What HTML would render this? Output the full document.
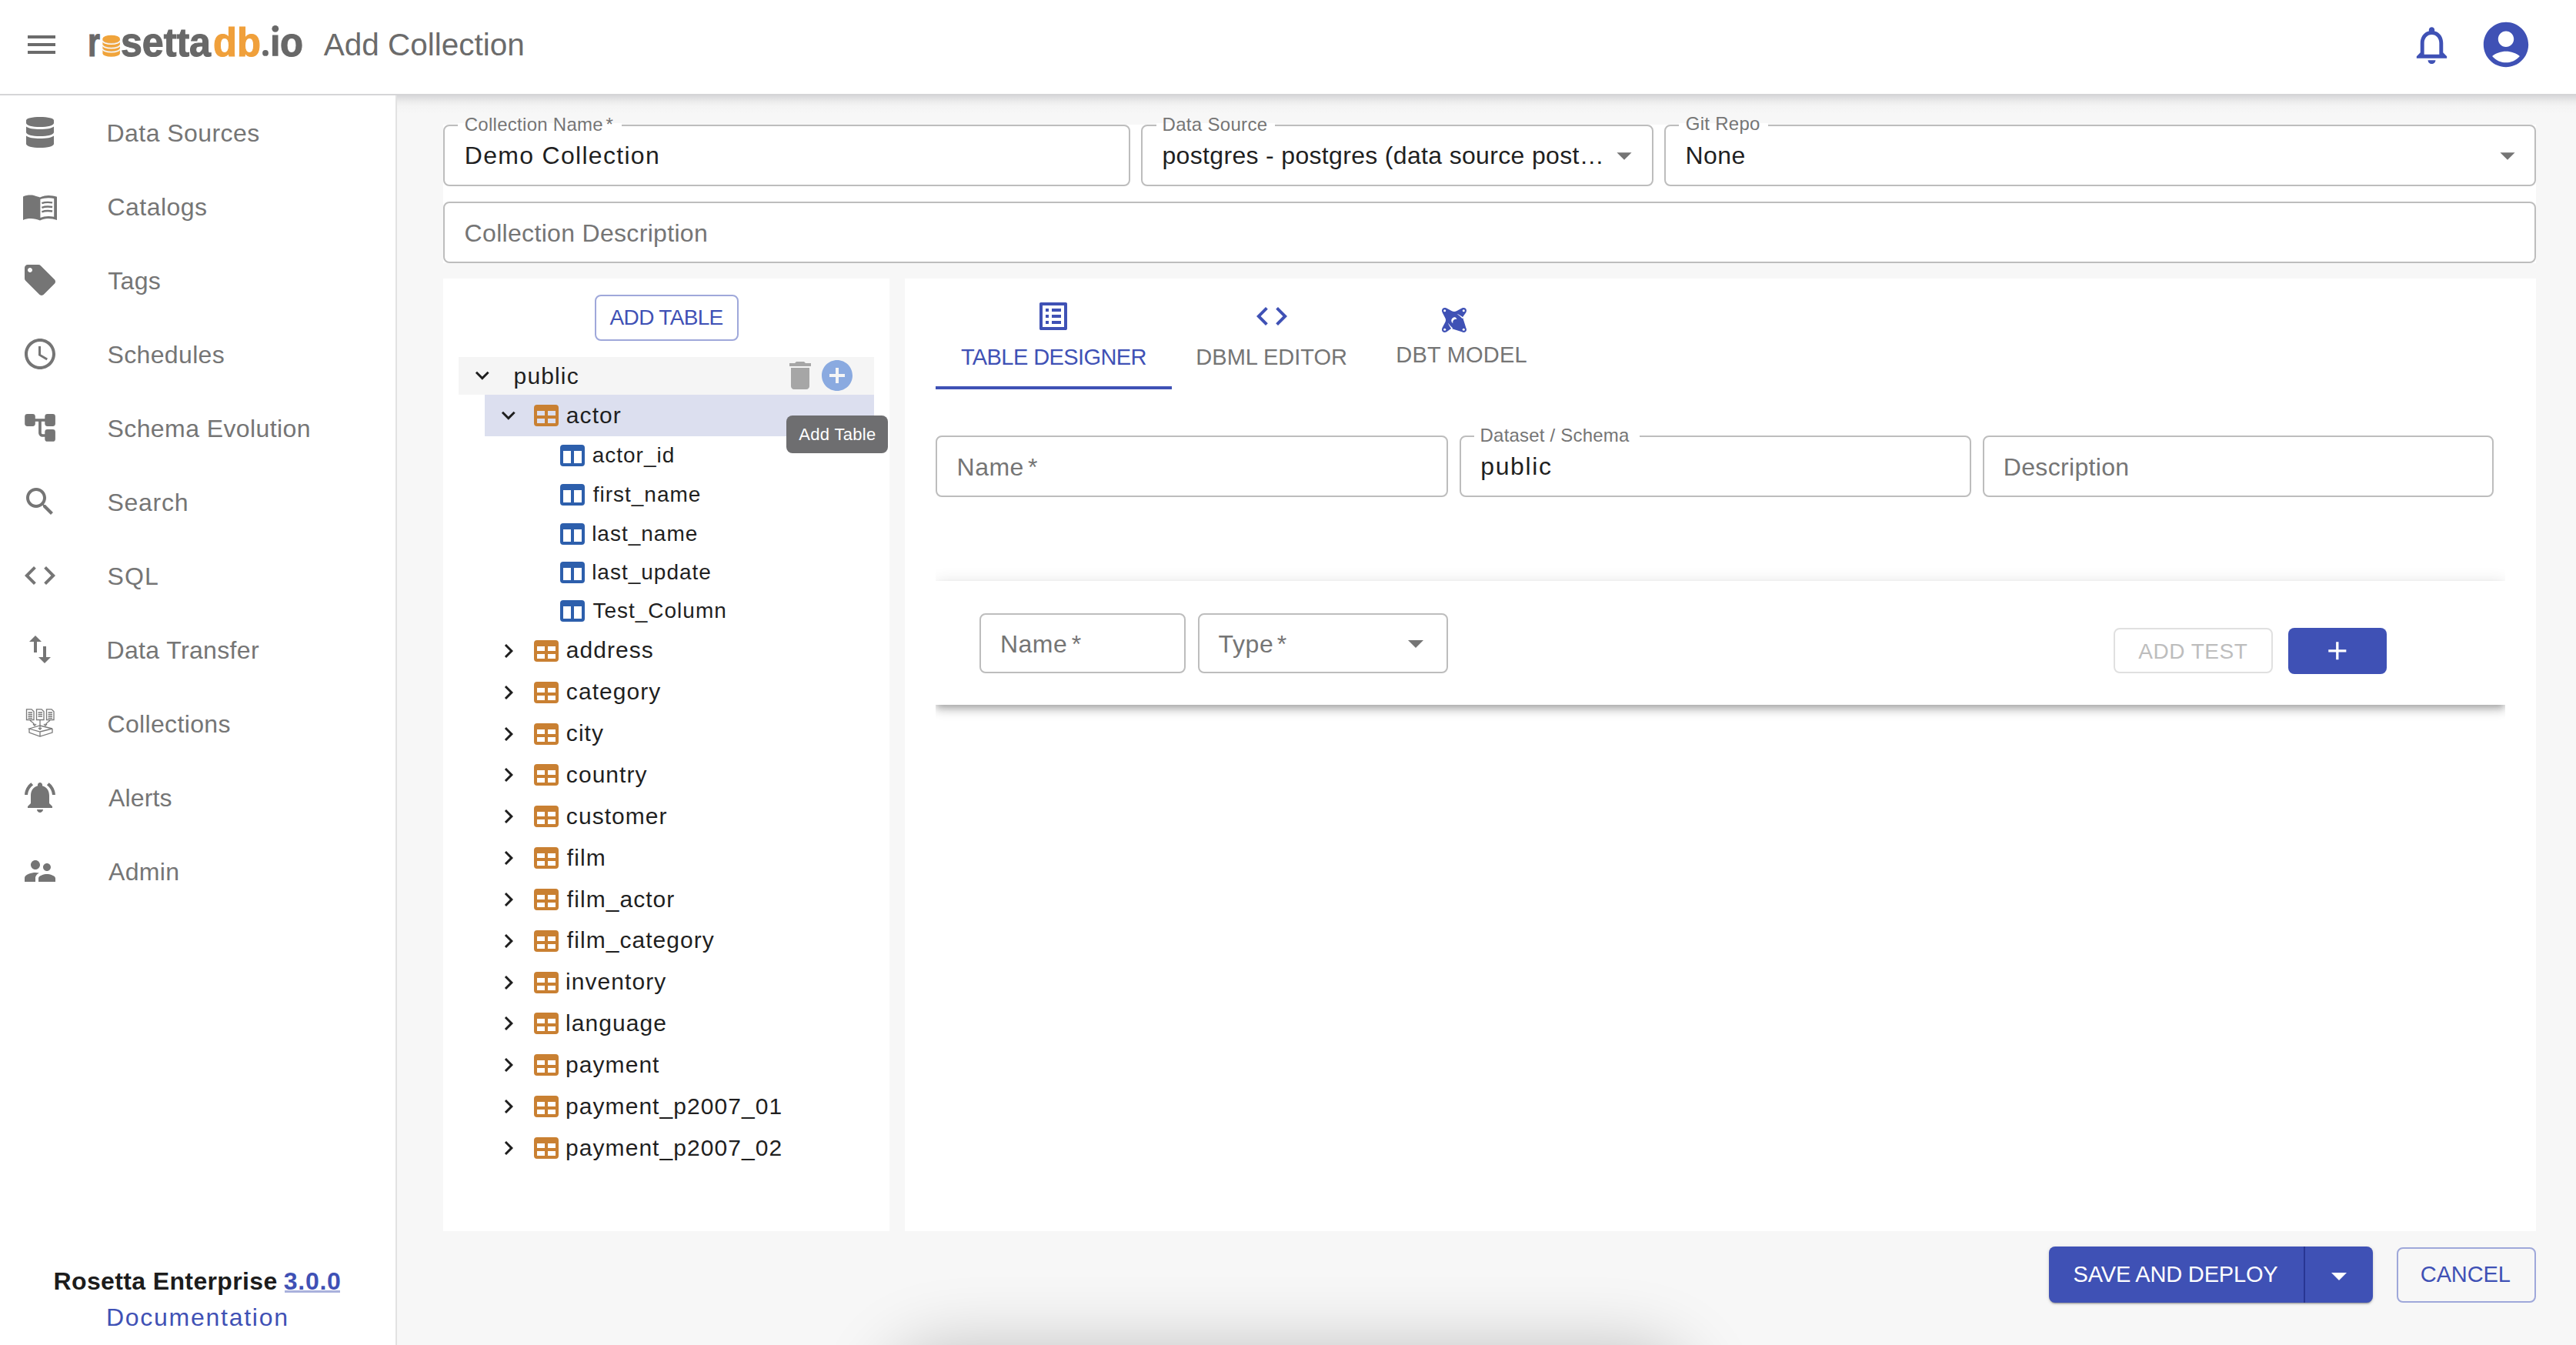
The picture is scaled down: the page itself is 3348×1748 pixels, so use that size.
<!DOCTYPE html><html><head><meta charset="utf-8"><style>
html,body{margin:0;padding:0;}
body{width:3348px;height:1748px;position:relative;overflow:hidden;background:#f7f7f7;font-family:"Liberation Sans",sans-serif;}
.t{position:absolute;white-space:nowrap;line-height:1;}
.b{position:absolute;box-sizing:border-box;}
.i{position:absolute;overflow:visible;}
@media (max-width:2400px){html{zoom:0.5;}}
</style></head><body>
<div class="b" style="left:0.00px;top:122.00px;width:3348.00px;height:28.00px;background:linear-gradient(#d3d3d6 0px,#dcdcde 4px,#ececec 10px,#f4f4f4 16px,#f7f7f7 26px);"></div>
<div class="b" style="left:0.00px;top:0.00px;width:3348.00px;height:122.00px;background:#fff;"></div>
<div class="b" style="left:0.00px;top:122.00px;width:3348.00px;height:2.00px;background:#d5d5d7;"></div>
<svg class="i" style="left:30.00px;top:34.30px;" width="48" height="48" viewBox="0 0 24 24"><path fill="#6b6b6b" d="M3 18h18v-2H3v2zm0-5h18v-2H3v2zm0-7v2h18V6H3z"/></svg>
<svg class="i" style="left:0;top:0" width="420" height="110" viewBox="0 0 420 110">
<text x="114" y="72.8" font-family="Liberation Sans" font-weight="700" font-size="51" fill="#686868" stroke="#686868" stroke-width="1.1" textLength="16" lengthAdjust="spacingAndGlyphs">r</text>
<text x="157" y="72.8" font-family="Liberation Sans" font-weight="700" font-size="51" fill="#686868" stroke="#686868" stroke-width="1.1" textLength="117" lengthAdjust="spacingAndGlyphs">setta</text>
<text x="277" y="72.8" font-family="Liberation Sans" font-weight="700" font-size="51" fill="#f0a03b" stroke="#f0a03b" stroke-width="1.1" textLength="62" lengthAdjust="spacingAndGlyphs">db</text>
<g fill="#686868"><circle cx="345" cy="68.9" r="3.9"/><rect x="354" y="45.5" width="7.5" height="27.3"/><circle cx="357.8" cy="37.3" r="4.4"/></g>
<text x="364" y="72.8" font-family="Liberation Sans" font-weight="700" font-size="51" fill="#686868" stroke="#686868" stroke-width="1.1" textLength="30" lengthAdjust="spacingAndGlyphs">o</text>
<path fill="#f0a43b" d="M133.4 50.2 A11.25 4.5 0 0 1 155.9 50.2 V69.4 A11.25 4.3 0 0 1 133.4 69.4Z"/>
<path fill="none" stroke="#fff" stroke-width="1.5" d="M133.4 53.0 A11.25 4.2 0 0 0 155.9 53.0 M133.4 58.6 A11.25 4.2 0 0 0 155.9 58.6 M133.4 63.6 A11.25 4.2 0 0 0 155.9 63.6"/>
<path fill="none" stroke="#d8d8d8" stroke-width="0.6" d="M133.4 52.2 A11.25 4.2 0 0 0 155.9 52.2 M133.4 57.8 A11.25 4.2 0 0 0 155.9 57.8 M133.4 62.8 A11.25 4.2 0 0 0 155.9 62.8"/>
</svg>
<div class="t" style="left:420.70px;top:37.62px;font-size:40.5px;color:#6b6b6b;font-weight:400;letter-spacing:-0.008px;">Add Collection</div>
<svg class="i" style="left:3130.80px;top:28.85px;" width="59" height="59" viewBox="0 0 24 24"><path fill="#3f51b5" d="M12 22c1.1 0 2-.9 2-2h-4c0 1.1.9 2 2 2zm6-6v-5c0-3.07-1.63-5.64-4.5-6.32V4c0-.83-.67-1.5-1.5-1.5s-1.5.67-1.5 1.5v.68C7.64 5.36 6 7.92 6 11v5l-2 2v1h16v-1l-2-2zm-2 1H8v-6c0-2.48 1.51-4.5 4-4.5s4 2.02 4 4.5v6z"/></svg>
<svg class="i" style="left:3222.20px;top:22.70px;" width="70" height="70" viewBox="0 0 24 24"><path fill="#3f51b5" d="M12 2C6.48 2 2 6.48 2 12s4.48 10 10 10 10-4.48 10-10S17.52 2 12 2zm0 4c1.93 0 3.5 1.57 3.5 3.5S13.93 13 12 13s-3.5-1.57-3.5-3.5S10.07 6 12 6zm0 14c-2.03 0-4.43-.82-6.14-2.88C7.55 15.8 9.68 15 12 15s4.45.8 6.14 2.12C16.43 19.18 14.03 20 12 20z"/></svg>
<div class="b" style="left:0.00px;top:124.00px;width:514.00px;height:1624.00px;background:#fff;"></div>
<div class="b" style="left:514.00px;top:124.00px;width:2.00px;height:1624.00px;background:#e2e2e2;"></div>
<div class="t" style="left:138.50px;top:156.51px;font-size:32px;color:#757575;font-weight:400;letter-spacing:0.445px;">Data Sources</div>
<div class="t" style="left:139.50px;top:252.51px;font-size:32px;color:#757575;font-weight:400;letter-spacing:0.45px;">Catalogs</div>
<div class="t" style="left:140.25px;top:348.51px;font-size:32px;color:#757575;font-weight:400;letter-spacing:0.317px;">Tags</div>
<div class="t" style="left:139.50px;top:444.51px;font-size:32px;color:#757575;font-weight:400;letter-spacing:0.35px;">Schedules</div>
<div class="t" style="left:139.50px;top:540.51px;font-size:32px;color:#757575;font-weight:400;letter-spacing:0.407px;">Schema Evolution</div>
<div class="t" style="left:139.50px;top:636.51px;font-size:32px;color:#757575;font-weight:400;letter-spacing:0.71px;">Search</div>
<div class="t" style="left:139.50px;top:732.51px;font-size:32px;color:#757575;font-weight:400;letter-spacing:1.15px;">SQL</div>
<div class="t" style="left:138.50px;top:828.51px;font-size:32px;color:#757575;font-weight:400;letter-spacing:0.358px;">Data Transfer</div>
<div class="t" style="left:139.50px;top:924.51px;font-size:32px;color:#757575;font-weight:400;letter-spacing:0.34px;">Collections</div>
<div class="t" style="left:141.00px;top:1020.51px;font-size:32px;color:#757575;font-weight:400;letter-spacing:0.15px;">Alerts</div>
<div class="t" style="left:141.00px;top:1116.51px;font-size:32px;color:#757575;font-weight:400;letter-spacing:0.337px;">Admin</div>
<svg class="i" style="left:34.00px;top:152.00px;" width="36" height="40" viewBox="0 0 36 40"><g fill="#757575">
<path d="M0 4.5 C0 1.5 8 0 18 0 S36 1.5 36 4.5 V8 C36 11 28 13 18 13 S0 11 0 8Z"/>
<path d="M0 12.5 C3 15 10 16 18 16 S33 15 36 12.5 V20 C36 23 28 25 18 25 S0 23 0 20Z"/>
<path d="M0 24.5 C3 27 10 28 18 28 S33 27 36 24.5 V35 C36 38 28 40 18 40 S0 38 0 35Z"/>
</g></svg>
<svg class="i" style="left:30.00px;top:253.00px;" width="44" height="34" viewBox="0 0 44 34"><g fill="#757575">
<path d="M0 2.5 C4 0.5 10 0 14 1 C16.5 1.6 19 2.6 22 3.6 V33.5 C18.5 32 14 31 10 31 C6 31 3 31.5 0 33Z"/>
<path d="M22 3.6 C25 2.2 29 1 33 1 C37 1 40.5 1.8 44 2.8 V33 C40.5 31.8 36.5 31 32.5 31 C28.5 31 25 32 22 33.5Z"/>
</g>
<path fill="#fff" d="M22.4 6 C25.5 5 29 4.3 33 4.3 C35.5 4.3 37.8 4.6 40.2 5 V28.8 C37.8 28.3 35.5 28 33 28 C29 28 25.5 28.8 22.4 30Z"/>
<path fill="none" stroke="#757575" stroke-width="2.4" d="M24.4 11.2 C28 9.8 33 9.6 38.1 10.4 M24.4 16.8 C28 15.4 33 15.2 38.1 16 M24.4 22.3 C28 20.9 33 20.7 38.1 21.5"/>
</svg>
<svg class="i" style="left:28.00px;top:340.00px;" width="48" height="48" viewBox="0 0 24 24"><path fill="#757575" d="M21.41 11.58l-9-9C12.05 2.22 11.55 2 11 2H4c-1.1 0-2 .9-2 2v7c0 .55.22 1.05.59 1.42l9 9c.36.36.86.58 1.41.58.55 0 1.05-.22 1.41-.59l7-7c.37-.36.59-.86.59-1.41 0-.55-.23-1.06-.59-1.42zM5.5 7C4.67 7 4 6.33 4 5.5S4.67 4 5.5 4 7 4.67 7 5.5 6.33 7 5.5 7z"/></svg>
<svg class="i" style="left:28.00px;top:436.00px;" width="48" height="48" viewBox="0 0 24 24"><path fill="#757575" d="M11.99 2C6.47 2 2 6.48 2 12s4.47 10 9.99 10C17.52 22 22 17.52 22 12S17.52 2 11.99 2zM12 20c-4.42 0-8-3.58-8-8s3.58-8 8-8 8 3.58 8 8-3.58 8-8 8zm.5-13H11v6l5.25 3.15.75-1.23-4.5-2.67z"/></svg>
<svg class="i" style="left:32.00px;top:538.00px;" width="42" height="42" viewBox="0 0 42 42"><g fill="#757575">
<rect x="13" y="6.2" width="14" height="3.6"/>
<path d="M18.1 8 H21.8 V24.5 C21.8 25.5 22.5 26.2 23.5 26.2 H28 V29.8 H23.5 C20.4 29.8 18.1 27.5 18.1 24.5Z"/>
<rect x="0.2" y="0" width="13.6" height="16" rx="3.4"/>
<rect x="26.3" y="0" width="13.6" height="16" rx="3.4"/>
<rect x="26.3" y="20" width="13.6" height="15.8" rx="3.4"/>
</g></svg>
<svg class="i" style="left:28.00px;top:628.00px;" width="48" height="48" viewBox="0 0 24 24"><path fill="#757575" d="M15.5 14h-.79l-.28-.27C15.41 12.59 16 11.11 16 9.5 16 5.91 13.09 3 9.5 3S3 5.91 3 9.5 5.91 16 9.5 16c1.61 0 3.09-.59 4.23-1.57l.27.28v.79l5 4.99L20.49 19l-4.99-5zm-6 0C7.01 14 5 11.99 5 9.5S7.01 5 9.5 5 14 7.01 14 9.5 11.99 14 9.5 14z"/></svg>
<svg class="i" style="left:28.00px;top:724.00px;" width="48" height="48" viewBox="0 0 24 24"><path fill="#757575" d="M9.4 16.6L4.8 12l4.6-4.6L8 6l-6 6 6 6 1.4-1.4zm5.2 0l4.6-4.6-4.6-4.6L16 6l6 6-6 6-1.4-1.4z"/></svg>
<svg class="i" style="left:28.00px;top:820.00px;" width="48" height="48" viewBox="0 0 24 24"><path fill="#757575" d="M16 17.01V10h-2v7.01h-3L15 21l4-3.99h-3zM9 3L5 6.99h3V14h2V6.99h3L9 3z"/></svg>
<svg class="i" style="left:32.00px;top:921.00px;" width="44" height="44" viewBox="0 0 44 44"><g fill="none" stroke="#7a7a7a" stroke-width="1.3">
<path d="M2.5 0.8 H9 L12 3.8 V14.5 H2.5Z"/><path d="M15.5 0.8 H22 L25 3.8 V14.5 H15.5Z"/><path d="M28.5 0.8 H35 L38 3.8 V14.5 H28.5Z"/>
<path d="M4.5 5 H10 M4.5 7.5 H10 M4.5 10 H10 M4.5 12.3 H10 M17.5 5 H23 M17.5 7.5 H23 M17.5 10 H23 M30.5 5 H36 M30.5 7.5 H36 M30.5 10 H36 M30.5 12.3 H36"/>
<path d="M7 14.5 C8 18 12 17 13 21.5 M20 14.5 V27 M33 14.5 C32 18 28 17 27 21.5"/>
<path d="M11 20 L13 22 L15 20 M18 25 L20 27 L22 25 M25 20 L27 22 L29 20"/>
<path d="M6 26 L20 22 L36 26 L20 30Z M6 26 V31 L20 36 L36 31 V26 M20 30 V36"/>
</g></svg>
<svg class="i" style="left:28.00px;top:1012.00px;" width="48" height="48" viewBox="0 0 24 24"><path fill="#757575" d="M7.58 4.08L6.15 2.65C3.75 4.48 2.17 7.3 2.03 10.5h2c.15-2.65 1.51-4.97 3.55-6.42zm12.39 6.42h2c-.15-3.2-1.73-6.02-4.12-7.85l-1.42 1.43c2.02 1.45 3.39 3.77 3.54 6.42zM18 11c0-3.07-1.64-5.64-4.5-6.32V4c0-.83-.67-1.5-1.5-1.5s-1.5.67-1.5 1.5v.68C7.63 5.36 6 7.92 6 11v5l-2 2v1h16v-1l-2-2v-5zm-6 11c.14 0 .27-.01.4-.04.65-.14 1.18-.58 1.44-1.18.1-.24.15-.5.15-.78h-4c.01 1.1.9 2 2.01 2z"/></svg>
<svg class="i" style="left:28.00px;top:1108.00px;" width="48" height="48" viewBox="0 0 24 24"><path fill="#757575" d="M16.5 12c1.38 0 2.49-1.12 2.49-2.5S17.88 7 16.5 7C15.12 7 14 8.12 14 9.5s1.12 2.5 2.5 2.5zM9 11c1.66 0 2.99-1.34 2.99-3S10.66 5 9 5C7.34 5 6 6.34 6 8s1.34 3 3 3zm7.5 3c-1.83 0-5.5.92-5.5 2.75V19h11v-2.25c0-1.83-3.67-2.75-5.5-2.75zM9 13c-2.33 0-7 1.17-7 3.5V19h7v-2.25c0-.85.33-2.34 2.37-3.47C10.5 13.1 9.66 13 9 13z"/></svg>
<div class="t" style="left:69.50px;top:1648.71px;font-size:32px;color:#1c1c1c;font-weight:700;letter-spacing:0.371px;">Rosetta Enterprise</div>
<div class="t" style="left:368.75px;top:1648.71px;font-size:32px;color:#3f51b5;font-weight:700;letter-spacing:0.738px;">3.0.0</div>
<div class="b" style="left:369.50px;top:1676.50px;width:72.50px;height:3.00px;background:#a9b1dc;"></div>
<div class="t" style="left:138.00px;top:1695.71px;font-size:32px;color:#3f51b5;font-weight:400;letter-spacing:1.729px;">Documentation</div>
<div class="b" style="left:576.00px;top:162.00px;width:2720.00px;height:180.00px;background:#fff;"></div>
<div class="b" style="left:576.00px;top:162.00px;width:893.00px;height:80.00px;border:2px solid #bdbdbd;border-radius:8px;background:#fff;"></div>
<div class="b" style="left:595.00px;top:160.00px;width:213.30px;height:5.00px;background:#fff;"></div>
<div class="t" style="left:603.75px;top:149.78px;font-size:24px;color:#757575;font-weight:400;letter-spacing:0.275px;">Collection Name</div>
<div class="t" style="left:787.50px;top:149.78px;font-size:24px;color:#757575;font-weight:400;letter-spacing:0px;">*</div>
<div class="t" style="left:603.80px;top:185.81px;font-size:32px;color:#1f1f1f;font-weight:400;letter-spacing:1.296px;">Demo Collection</div>
<div class="b" style="left:1483.00px;top:162.00px;width:666.00px;height:80.00px;border:2px solid #bdbdbd;border-radius:8px;background:#fff;"></div>
<div class="b" style="left:1502.50px;top:160.00px;width:154.50px;height:5.00px;background:#fff;"></div>
<div class="t" style="left:1510.50px;top:149.78px;font-size:24px;color:#757575;font-weight:400;letter-spacing:0.315px;">Data Source</div>
<div class="t" style="left:1510.50px;top:185.51px;font-size:32px;color:#1f1f1f;font-weight:400;letter-spacing:0.328px;">postgres - postgres (data source post…</div>
<svg class="i" style="left:2088.00px;top:178.80px;" width="46" height="46" viewBox="0 0 24 24"><path fill="#757575" d="M7 10l5 5 5-5z"/></svg>
<div class="b" style="left:2163.00px;top:162.00px;width:1133.00px;height:80.00px;border:2px solid #bdbdbd;border-radius:8px;background:#fff;"></div>
<div class="b" style="left:2182.00px;top:160.00px;width:116.00px;height:5.00px;background:#fff;"></div>
<div class="t" style="left:2190.75px;top:149.48px;font-size:24px;color:#757575;font-weight:400;letter-spacing:0.271px;">Git Repo</div>
<div class="t" style="left:2190.50px;top:185.71px;font-size:32px;color:#1f1f1f;font-weight:400;letter-spacing:0.417px;">None</div>
<svg class="i" style="left:3236.00px;top:178.80px;" width="46" height="46" viewBox="0 0 24 24"><path fill="#757575" d="M7 10l5 5 5-5z"/></svg>
<div class="b" style="left:576.00px;top:262.00px;width:2720.00px;height:80.00px;border:2px solid #bdbdbd;border-radius:8px;background:#fff;"></div>
<div class="t" style="left:603.60px;top:286.81px;font-size:32px;color:#757575;font-weight:400;letter-spacing:0.319px;">Collection Description</div>
<div class="b" style="left:576.00px;top:362.00px;width:580.00px;height:1238.00px;background:#fff;"></div>
<div class="b" style="left:1176.00px;top:362.00px;width:2120.00px;height:1238.00px;background:#fff;"></div>
<div class="b" style="left:773.00px;top:383.00px;width:187.00px;height:60.00px;border:2px solid #9fa8da;border-radius:8px;"></div>
<div class="t" style="left:792.60px;top:398.90px;font-size:28px;color:#3f51b5;font-weight:400;letter-spacing:-0.669px;">ADD TABLE</div>
<div class="b" style="left:596.00px;top:464.20px;width:540.00px;height:48.70px;background:#f5f5f5;"></div>
<svg class="i" style="left:609.20px;top:470.00px;" width="35.6" height="35.6" viewBox="0 0 24 24"><path fill="#1f1f1f" d="M16.59 8.59L12 13.17 7.41 8.59 6 10l6 6 6-6z"/></svg>
<div class="t" style="left:667.60px;top:473.61px;font-size:30px;color:#1f1f1f;font-weight:400;letter-spacing:1.13px;">public</div>
<svg class="i" style="left:1016.00px;top:464.00px;" width="48" height="48" viewBox="0 0 24 24"><path fill="#a6a6a6" d="M6 19c0 1.1.9 2 2 2h8c1.1 0 2-.9 2-2V7H6v12zM19 4h-3.5l-1-1h-5l-1 1H5v2h14V4z"/></svg>
<svg class="i" style="left:1064.00px;top:464.00px;" width="48" height="48" viewBox="0 0 24 24"><path fill="#8aaae0" d="M12 2C6.48 2 2 6.48 2 12s4.48 10 10 10 10-4.48 10-10S17.52 2 12 2zm5 11h-4v4h-2v-4H7v-2h4V7h2v4h4v2z"/></svg>
<div class="b" style="left:630.00px;top:512.90px;width:506.00px;height:53.70px;background:#dcdfef;"></div>
<svg class="i" style="left:643.20px;top:522.00px;" width="35.6" height="35.6" viewBox="0 0 24 24"><path fill="#1f1f1f" d="M16.59 8.59L12 13.17 7.41 8.59 6 10l6 6 6-6z"/></svg>
<svg class="i" style="left:694.00px;top:526.00px;fill-rule:evenodd" width="32" height="28" viewBox="0 0 32 28"><g fill="#c98032"><path d="M4 0H28A4 4 0 0 1 32 4V24A4 4 0 0 1 28 28H4A4 4 0 0 1 0 24V4A4 4 0 0 1 4 0ZM4 8V14H14V8ZM18 8V14H28V8ZM4 18V24H14V18ZM18 18V24H28V18Z"/></g></svg>
<div class="t" style="left:735.85px;top:524.61px;font-size:30px;color:#1f1f1f;font-weight:400;letter-spacing:1.05px;">actor</div>
<svg class="i" style="left:728.00px;top:578.00px;" width="32" height="28" viewBox="0 0 32 28"><g fill="#2d5fac"><path d="M4 0H28A4 4 0 0 1 32 4V24A4 4 0 0 1 28 28H4A4 4 0 0 1 0 24V4A4 4 0 0 1 4 0ZM4 8V24H14V8ZM18 8V24H28V8Z"/></g></svg>
<div class="t" style="left:769.65px;top:578.30px;font-size:28px;color:#1f1f1f;font-weight:400;letter-spacing:1.0px;">actor_id</div>
<svg class="i" style="left:728.00px;top:629.00px;" width="32" height="28" viewBox="0 0 32 28"><g fill="#2d5fac"><path d="M4 0H28A4 4 0 0 1 32 4V24A4 4 0 0 1 28 28H4A4 4 0 0 1 0 24V4A4 4 0 0 1 4 0ZM4 8V24H14V8ZM18 8V24H28V8Z"/></g></svg>
<div class="t" style="left:770.65px;top:629.30px;font-size:28px;color:#1f1f1f;font-weight:400;letter-spacing:1.0px;">first_name</div>
<svg class="i" style="left:728.00px;top:679.50px;" width="32" height="28" viewBox="0 0 32 28"><g fill="#2d5fac"><path d="M4 0H28A4 4 0 0 1 32 4V24A4 4 0 0 1 28 28H4A4 4 0 0 1 0 24V4A4 4 0 0 1 4 0ZM4 8V24H14V8ZM18 8V24H28V8Z"/></g></svg>
<div class="t" style="left:769.15px;top:679.80px;font-size:28px;color:#1f1f1f;font-weight:400;letter-spacing:1.0px;">last_name</div>
<svg class="i" style="left:728.00px;top:730.00px;" width="32" height="28" viewBox="0 0 32 28"><g fill="#2d5fac"><path d="M4 0H28A4 4 0 0 1 32 4V24A4 4 0 0 1 28 28H4A4 4 0 0 1 0 24V4A4 4 0 0 1 4 0ZM4 8V24H14V8ZM18 8V24H28V8Z"/></g></svg>
<div class="t" style="left:769.15px;top:730.30px;font-size:28px;color:#1f1f1f;font-weight:400;letter-spacing:1.0px;">last_update</div>
<svg class="i" style="left:728.00px;top:780.00px;" width="32" height="28" viewBox="0 0 32 28"><g fill="#2d5fac"><path d="M4 0H28A4 4 0 0 1 32 4V24A4 4 0 0 1 28 28H4A4 4 0 0 1 0 24V4A4 4 0 0 1 4 0ZM4 8V24H14V8ZM18 8V24H28V8Z"/></g></svg>
<div class="t" style="left:770.40px;top:780.30px;font-size:28px;color:#1f1f1f;font-weight:400;letter-spacing:1.0px;">Test_Column</div>
<svg class="i" style="left:643.10px;top:827.80px;" width="36" height="36" viewBox="0 0 24 24"><path fill="#1f1f1f" d="M10 6L8.59 7.41 13.17 12l-4.58 4.59L10 18l6-6z"/></svg>
<svg class="i" style="left:694.00px;top:831.80px;fill-rule:evenodd" width="32" height="28" viewBox="0 0 32 28"><g fill="#c98032"><path d="M4 0H28A4 4 0 0 1 32 4V24A4 4 0 0 1 28 28H4A4 4 0 0 1 0 24V4A4 4 0 0 1 4 0ZM4 8V14H14V8ZM18 8V14H28V8ZM4 18V24H14V18ZM18 18V24H28V18Z"/></g></svg>
<div class="t" style="left:735.85px;top:830.40px;font-size:30px;color:#1f1f1f;font-weight:400;letter-spacing:1.05px;">address</div>
<svg class="i" style="left:643.10px;top:881.65px;" width="36" height="36" viewBox="0 0 24 24"><path fill="#1f1f1f" d="M10 6L8.59 7.41 13.17 12l-4.58 4.59L10 18l6-6z"/></svg>
<svg class="i" style="left:694.00px;top:885.65px;fill-rule:evenodd" width="32" height="28" viewBox="0 0 32 28"><g fill="#c98032"><path d="M4 0H28A4 4 0 0 1 32 4V24A4 4 0 0 1 28 28H4A4 4 0 0 1 0 24V4A4 4 0 0 1 4 0ZM4 8V14H14V8ZM18 8V14H28V8ZM4 18V24H14V18ZM18 18V24H28V18Z"/></g></svg>
<div class="t" style="left:735.85px;top:884.25px;font-size:30px;color:#1f1f1f;font-weight:400;letter-spacing:1.05px;">category</div>
<svg class="i" style="left:643.10px;top:935.50px;" width="36" height="36" viewBox="0 0 24 24"><path fill="#1f1f1f" d="M10 6L8.59 7.41 13.17 12l-4.58 4.59L10 18l6-6z"/></svg>
<svg class="i" style="left:694.00px;top:939.50px;fill-rule:evenodd" width="32" height="28" viewBox="0 0 32 28"><g fill="#c98032"><path d="M4 0H28A4 4 0 0 1 32 4V24A4 4 0 0 1 28 28H4A4 4 0 0 1 0 24V4A4 4 0 0 1 4 0ZM4 8V14H14V8ZM18 8V14H28V8ZM4 18V24H14V18ZM18 18V24H28V18Z"/></g></svg>
<div class="t" style="left:735.85px;top:938.11px;font-size:30px;color:#1f1f1f;font-weight:400;letter-spacing:1.05px;">city</div>
<svg class="i" style="left:643.10px;top:989.35px;" width="36" height="36" viewBox="0 0 24 24"><path fill="#1f1f1f" d="M10 6L8.59 7.41 13.17 12l-4.58 4.59L10 18l6-6z"/></svg>
<svg class="i" style="left:694.00px;top:993.35px;fill-rule:evenodd" width="32" height="28" viewBox="0 0 32 28"><g fill="#c98032"><path d="M4 0H28A4 4 0 0 1 32 4V24A4 4 0 0 1 28 28H4A4 4 0 0 1 0 24V4A4 4 0 0 1 4 0ZM4 8V14H14V8ZM18 8V14H28V8ZM4 18V24H14V18ZM18 18V24H28V18Z"/></g></svg>
<div class="t" style="left:735.85px;top:991.95px;font-size:30px;color:#1f1f1f;font-weight:400;letter-spacing:1.05px;">country</div>
<svg class="i" style="left:643.10px;top:1043.20px;" width="36" height="36" viewBox="0 0 24 24"><path fill="#1f1f1f" d="M10 6L8.59 7.41 13.17 12l-4.58 4.59L10 18l6-6z"/></svg>
<svg class="i" style="left:694.00px;top:1047.20px;fill-rule:evenodd" width="32" height="28" viewBox="0 0 32 28"><g fill="#c98032"><path d="M4 0H28A4 4 0 0 1 32 4V24A4 4 0 0 1 28 28H4A4 4 0 0 1 0 24V4A4 4 0 0 1 4 0ZM4 8V14H14V8ZM18 8V14H28V8ZM4 18V24H14V18ZM18 18V24H28V18Z"/></g></svg>
<div class="t" style="left:735.85px;top:1045.81px;font-size:30px;color:#1f1f1f;font-weight:400;letter-spacing:1.05px;">customer</div>
<svg class="i" style="left:643.10px;top:1097.05px;" width="36" height="36" viewBox="0 0 24 24"><path fill="#1f1f1f" d="M10 6L8.59 7.41 13.17 12l-4.58 4.59L10 18l6-6z"/></svg>
<svg class="i" style="left:694.00px;top:1101.05px;fill-rule:evenodd" width="32" height="28" viewBox="0 0 32 28"><g fill="#c98032"><path d="M4 0H28A4 4 0 0 1 32 4V24A4 4 0 0 1 28 28H4A4 4 0 0 1 0 24V4A4 4 0 0 1 4 0ZM4 8V14H14V8ZM18 8V14H28V8ZM4 18V24H14V18ZM18 18V24H28V18Z"/></g></svg>
<div class="t" style="left:736.85px;top:1099.65px;font-size:30px;color:#1f1f1f;font-weight:400;letter-spacing:1.05px;">film</div>
<svg class="i" style="left:643.10px;top:1150.90px;" width="36" height="36" viewBox="0 0 24 24"><path fill="#1f1f1f" d="M10 6L8.59 7.41 13.17 12l-4.58 4.59L10 18l6-6z"/></svg>
<svg class="i" style="left:694.00px;top:1154.90px;fill-rule:evenodd" width="32" height="28" viewBox="0 0 32 28"><g fill="#c98032"><path d="M4 0H28A4 4 0 0 1 32 4V24A4 4 0 0 1 28 28H4A4 4 0 0 1 0 24V4A4 4 0 0 1 4 0ZM4 8V14H14V8ZM18 8V14H28V8ZM4 18V24H14V18ZM18 18V24H28V18Z"/></g></svg>
<div class="t" style="left:736.85px;top:1153.51px;font-size:30px;color:#1f1f1f;font-weight:400;letter-spacing:1.05px;">film_actor</div>
<svg class="i" style="left:643.10px;top:1204.75px;" width="36" height="36" viewBox="0 0 24 24"><path fill="#1f1f1f" d="M10 6L8.59 7.41 13.17 12l-4.58 4.59L10 18l6-6z"/></svg>
<svg class="i" style="left:694.00px;top:1208.75px;fill-rule:evenodd" width="32" height="28" viewBox="0 0 32 28"><g fill="#c98032"><path d="M4 0H28A4 4 0 0 1 32 4V24A4 4 0 0 1 28 28H4A4 4 0 0 1 0 24V4A4 4 0 0 1 4 0ZM4 8V14H14V8ZM18 8V14H28V8ZM4 18V24H14V18ZM18 18V24H28V18Z"/></g></svg>
<div class="t" style="left:736.85px;top:1207.36px;font-size:30px;color:#1f1f1f;font-weight:400;letter-spacing:1.05px;">film_category</div>
<svg class="i" style="left:643.10px;top:1258.60px;" width="36" height="36" viewBox="0 0 24 24"><path fill="#1f1f1f" d="M10 6L8.59 7.41 13.17 12l-4.58 4.59L10 18l6-6z"/></svg>
<svg class="i" style="left:694.00px;top:1262.60px;fill-rule:evenodd" width="32" height="28" viewBox="0 0 32 28"><g fill="#c98032"><path d="M4 0H28A4 4 0 0 1 32 4V24A4 4 0 0 1 28 28H4A4 4 0 0 1 0 24V4A4 4 0 0 1 4 0ZM4 8V14H14V8ZM18 8V14H28V8ZM4 18V24H14V18ZM18 18V24H28V18Z"/></g></svg>
<div class="t" style="left:735.10px;top:1261.20px;font-size:30px;color:#1f1f1f;font-weight:400;letter-spacing:1.05px;">inventory</div>
<svg class="i" style="left:643.10px;top:1312.45px;" width="36" height="36" viewBox="0 0 24 24"><path fill="#1f1f1f" d="M10 6L8.59 7.41 13.17 12l-4.58 4.59L10 18l6-6z"/></svg>
<svg class="i" style="left:694.00px;top:1316.45px;fill-rule:evenodd" width="32" height="28" viewBox="0 0 32 28"><g fill="#c98032"><path d="M4 0H28A4 4 0 0 1 32 4V24A4 4 0 0 1 28 28H4A4 4 0 0 1 0 24V4A4 4 0 0 1 4 0ZM4 8V14H14V8ZM18 8V14H28V8ZM4 18V24H14V18ZM18 18V24H28V18Z"/></g></svg>
<div class="t" style="left:735.10px;top:1315.06px;font-size:30px;color:#1f1f1f;font-weight:400;letter-spacing:1.05px;">language</div>
<svg class="i" style="left:643.10px;top:1366.30px;" width="36" height="36" viewBox="0 0 24 24"><path fill="#1f1f1f" d="M10 6L8.59 7.41 13.17 12l-4.58 4.59L10 18l6-6z"/></svg>
<svg class="i" style="left:694.00px;top:1370.30px;fill-rule:evenodd" width="32" height="28" viewBox="0 0 32 28"><g fill="#c98032"><path d="M4 0H28A4 4 0 0 1 32 4V24A4 4 0 0 1 28 28H4A4 4 0 0 1 0 24V4A4 4 0 0 1 4 0ZM4 8V14H14V8ZM18 8V14H28V8ZM4 18V24H14V18ZM18 18V24H28V18Z"/></g></svg>
<div class="t" style="left:735.10px;top:1368.90px;font-size:30px;color:#1f1f1f;font-weight:400;letter-spacing:1.05px;">payment</div>
<svg class="i" style="left:643.10px;top:1420.15px;" width="36" height="36" viewBox="0 0 24 24"><path fill="#1f1f1f" d="M10 6L8.59 7.41 13.17 12l-4.58 4.59L10 18l6-6z"/></svg>
<svg class="i" style="left:694.00px;top:1424.15px;fill-rule:evenodd" width="32" height="28" viewBox="0 0 32 28"><g fill="#c98032"><path d="M4 0H28A4 4 0 0 1 32 4V24A4 4 0 0 1 28 28H4A4 4 0 0 1 0 24V4A4 4 0 0 1 4 0ZM4 8V14H14V8ZM18 8V14H28V8ZM4 18V24H14V18ZM18 18V24H28V18Z"/></g></svg>
<div class="t" style="left:735.10px;top:1422.76px;font-size:30px;color:#1f1f1f;font-weight:400;letter-spacing:1.05px;">payment_p2007_01</div>
<svg class="i" style="left:643.10px;top:1474.00px;" width="36" height="36" viewBox="0 0 24 24"><path fill="#1f1f1f" d="M10 6L8.59 7.41 13.17 12l-4.58 4.59L10 18l6-6z"/></svg>
<svg class="i" style="left:694.00px;top:1478.00px;fill-rule:evenodd" width="32" height="28" viewBox="0 0 32 28"><g fill="#c98032"><path d="M4 0H28A4 4 0 0 1 32 4V24A4 4 0 0 1 28 28H4A4 4 0 0 1 0 24V4A4 4 0 0 1 4 0ZM4 8V14H14V8ZM18 8V14H28V8ZM4 18V24H14V18ZM18 18V24H28V18Z"/></g></svg>
<div class="t" style="left:735.10px;top:1476.61px;font-size:30px;color:#1f1f1f;font-weight:400;letter-spacing:1.05px;">payment_p2007_02</div>
<div class="b" style="left:1022.00px;top:540.00px;width:132.00px;height:49.00px;background:#6e6e70;border-radius:8px;"></div>
<div class="t" style="left:1038.30px;top:553.68px;font-size:22px;color:#fff;font-weight:400;letter-spacing:0.312px;">Add Table</div>
<div class="b" style="left:1216.00px;top:502.00px;width:307.00px;height:4.00px;background:#3f51b5;"></div>
<svg class="i" style="left:1345.00px;top:386.80px;" width="48" height="48" viewBox="0 0 24 24"><path fill="#3f51b5" d="M19 5v14H5V5h14m1.1-2H3.9c-.5 0-.9.4-.9.9v16.2c0 .4.4.9.9.9h16.2c.4 0 .9-.5.9-.9V3.9c0-.5-.5-.9-.9-.9zM11 7h6v2h-6V7zm0 4h6v2h-6v-2zm0 4h6v2h-6zM7 7h2v2H7zm0 4h2v2H7zm0 4h2v2H7z"/></svg>
<div class="t" style="left:1248.90px;top:449.75px;font-size:29px;color:#3f51b5;font-weight:400;letter-spacing:-0.588px;">TABLE DESIGNER</div>
<svg class="i" style="left:1629.00px;top:387.00px;" width="48" height="48" viewBox="0 0 24 24"><path fill="#3f51b5" d="M9.4 16.6L4.8 12l4.6-4.6L8 6l-6 6 6 6 1.4-1.4zm5.2 0l4.6-4.6-4.6-4.6L16 6l6 6-6 6-1.4-1.4z"/></svg>
<div class="t" style="left:1554.35px;top:449.75px;font-size:29px;color:#757575;font-weight:400;letter-spacing:0.0px;">DBML EDITOR</div>
<svg class="i" style="left:1874.00px;top:400.00px;" width="32" height="32" viewBox="0 0 32 32"><path fill="#3f51b5" d="M3.6 0C5 0 6 .5 7.5 1.3L13 4.2C15 5.3 17 5.3 19 4.2L24.5 1.3C26 .5 27 0 28.4 0C30.4 0 32 1.6 32 3.6C32 4.6 31.7 5.4 31.2 6.2L26.8 12.4L27.3 13.3L31.3 25.9C31.7 26.7 32 27.4 32 28.4C32 30.4 30.4 32 28.4 32C27.4 32 26.7 31.7 25.9 31.3L13.3 27.3L12.4 26.8L6.2 31.2C5.4 31.7 4.6 32 3.6 32C1.6 32 0 30.4 0 28.4C0 27 .5 26 1.3 24.5L4.2 19C5.3 17 5.3 15 4.2 13L1.3 7.5C.5 6 0 5 0 3.6C0 1.6 1.6 0 3.6 0Z"/>
<g fill="#fff"><circle cx="3.7" cy="3.7" r="1.5"/><circle cx="28.3" cy="3.7" r="1.5"/><circle cx="3.7" cy="28.3" r="1.5"/><circle cx="28.3" cy="28.3" r="1.5"/>
<path d="M19.6 8.0C22.6 9.0 25.3 10.6 27.7 12.7L26.5 14.1C24.5 11.8 22.2 9.8 19.6 8.0Z"/>
<path d="M8.0 19.6C9.0 22.6 10.6 25.3 12.7 27.7L14.1 26.5C11.8 24.5 9.8 22.2 8.0 19.6Z"/>
<path d="M17.2 12.2C14.6 12.1 12.3 14.1 12.3 16.6C12.3 18.2 13.1 19.7 14.5 20.3C14.2 19.6 14.1 18.9 14.2 18.2C14.5 16.1 16.4 14.6 18.6 14.8C19 14.8 19.3 14.9 19.6 15C19 13.5 18.2 12.6 17.2 12.2Z"/></g></svg>
<div class="t" style="left:1814.25px;top:447.15px;font-size:29px;color:#757575;font-weight:400;letter-spacing:0.212px;">DBT MODEL</div>
<div class="b" style="left:1216.00px;top:566.00px;width:666.00px;height:80.00px;border:2px solid #bdbdbd;border-radius:8px;background:#fff;"></div>
<div class="t" style="left:1243.60px;top:590.81px;font-size:32px;color:#757575;font-weight:400;letter-spacing:0.467px;">Name</div>
<div class="t" style="left:1335.90px;top:590.81px;font-size:32px;color:#757575;font-weight:400;letter-spacing:0px;">*</div>
<div class="b" style="left:1897.00px;top:566.00px;width:665.00px;height:80.00px;border:2px solid #bdbdbd;border-radius:8px;background:#fff;"></div>
<div class="b" style="left:1915.60px;top:564.00px;width:215.40px;height:5.00px;background:#fff;"></div>
<div class="t" style="left:1923.60px;top:553.58px;font-size:24px;color:#757575;font-weight:400;letter-spacing:0.193px;">Dataset / Schema</div>
<div class="t" style="left:1924.20px;top:589.71px;font-size:32px;color:#1f1f1f;font-weight:400;letter-spacing:1.65px;">public</div>
<div class="b" style="left:2577.00px;top:566.00px;width:664.00px;height:80.00px;border:2px solid #bdbdbd;border-radius:8px;background:#fff;"></div>
<div class="t" style="left:2603.80px;top:590.91px;font-size:32px;color:#757575;font-weight:400;letter-spacing:0.33px;">Description</div>
<div class="b" style="left:1216px;top:700px;width:2040px;height:300px;overflow:hidden;"><div class="b" style="left:0;top:55.3px;width:2040px;height:160.7px;background:#fff;box-shadow:0 4px 8px -2px rgba(0,0,0,0.2),0 8px 10px 0 rgba(0,0,0,0.14),0 2px 20px 0 rgba(0,0,0,0.12);"></div></div>
<div class="b" style="left:1273.40px;top:796.60px;width:267.90px;height:78.80px;border:2px solid #bdbdbd;border-radius:8px;background:#fff;"></div>
<div class="t" style="left:1299.90px;top:820.91px;font-size:32px;color:#757575;font-weight:400;letter-spacing:0.533px;">Name</div>
<div class="t" style="left:1392.80px;top:820.91px;font-size:32px;color:#757575;font-weight:400;letter-spacing:0px;">*</div>
<div class="b" style="left:1556.50px;top:796.60px;width:325.00px;height:78.80px;border:2px solid #bdbdbd;border-radius:8px;background:#fff;"></div>
<div class="t" style="left:1583.55px;top:820.91px;font-size:32px;color:#757575;font-weight:400;letter-spacing:0.617px;">Type</div>
<div class="t" style="left:1659.80px;top:820.91px;font-size:32px;color:#757575;font-weight:400;letter-spacing:0px;">*</div>
<svg class="i" style="left:1816.00px;top:812.00px;" width="48" height="48" viewBox="0 0 24 24"><path fill="#757575" d="M7 10l5 5 5-5z"/></svg>
<div class="b" style="left:2746.50px;top:816.40px;width:207.10px;height:59.10px;border:2px solid #e0e0e0;border-radius:8px;"></div>
<div class="t" style="left:2779.20px;top:833.40px;font-size:28px;color:#bdbdbd;font-weight:400;letter-spacing:0.521px;">ADD TEST</div>
<div class="b" style="left:2974.20px;top:816.00px;width:127.80px;height:60.00px;background:#3f51b5;border-radius:8px;"></div>
<svg class="i" style="left:3017.60px;top:826.00px;" width="39.6" height="39.6" viewBox="0 0 24 24"><path fill="#fff" d="M19 13h-6v6h-2v-6H5v-2h6V5h2v6h6v2z"/></svg>
<div class="b" style="left:2663.00px;top:1620.00px;width:421.00px;height:73.00px;background:#3f51b5;border-radius:8px;box-shadow:0 3px 1px -2px rgba(0,0,0,0.2),0 2px 2px 0 rgba(0,0,0,0.14),0 1px 5px 0 rgba(0,0,0,0.12);"></div>
<div class="b" style="left:2994.00px;top:1620.00px;width:2.00px;height:73.00px;background:#283593;"></div>
<div class="t" style="left:2694.55px;top:1641.95px;font-size:29px;color:#fff;font-weight:400;letter-spacing:-0.182px;">SAVE AND DEPLOY</div>
<svg class="i" style="left:3015.50px;top:1634.00px;" width="48" height="48" viewBox="0 0 24 24"><path fill="#fff" d="M7 10l5 5 5-5z"/></svg>
<div class="b" style="left:3114.50px;top:1620.50px;width:181.00px;height:72.00px;border:2px solid #9fa8da;border-radius:8px;"></div>
<div class="t" style="left:3145.80px;top:1641.95px;font-size:29px;color:#3f51b5;font-weight:400;letter-spacing:-0.11px;">CANCEL</div>
<div class="b" style="left:1190.00px;top:1790.00px;width:970.00px;height:110.00px;background:#000;border-radius:40px;box-shadow:0 0 90px 40px rgba(0,0,0,0.22);opacity:1;"></div>
</body></html>
